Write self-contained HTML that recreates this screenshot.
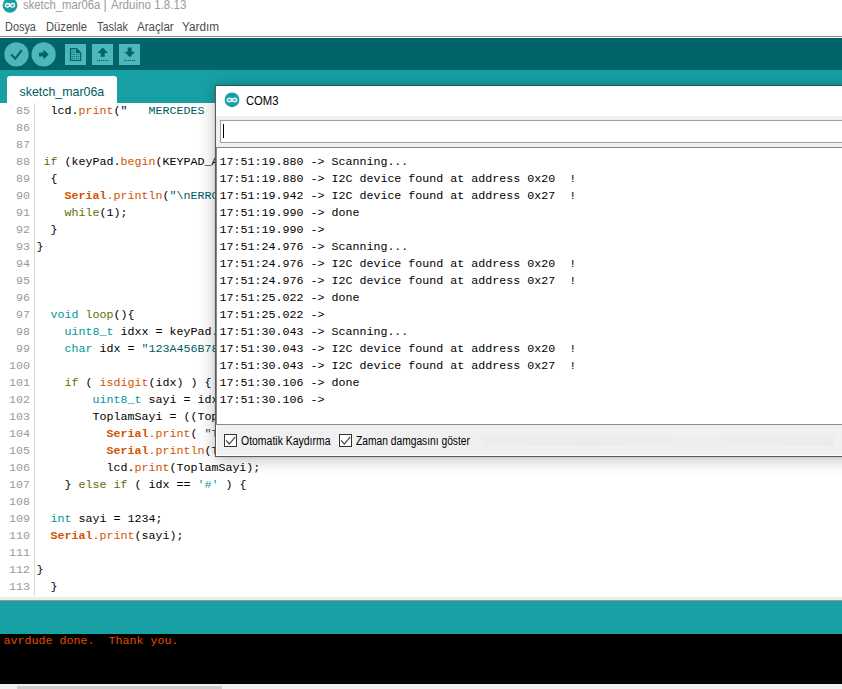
<!DOCTYPE html>
<html>
<head>
<meta charset="utf-8">
<title>sketch_mar06a | Arduino 1.8.13</title>
<style>
html,body{margin:0;padding:0;}
body{width:842px;height:689px;overflow:hidden;position:relative;background:#fff;font-family:"Liberation Sans",sans-serif;}
.abs{position:absolute;}
/* title bar */
.tt{top:-3px;transform-origin:0 0;font-size:12.600px;color:#9a9a9a;white-space:pre;line-height:16px;}
/* menu */
#menu span{position:absolute;transform-origin:0 0;top:19px;font-size:12px;line-height:16px;color:#4d4d4d;white-space:pre;}
#menuline{left:0;top:36px;width:842px;height:1px;background:#8e8e8e;}
/* toolbar */
#toolbar{left:0;top:38px;width:842px;height:32px;background:#006468;}
#tabbar{left:0;top:70px;width:842px;height:33px;background:#17a1a5;}
#tab{left:7px;top:76px;width:110px;height:30px;background:#fff;border-radius:3px 3px 0 0;}
#tabtxt{left:19.5px;top:84px;font-size:12.4px;line-height:16px;color:#005c5f;white-space:pre;}
.circ{position:absolute;width:24px;height:24.4px;border-radius:50%;background:#4db7bb;top:42.2px;}
.sq{position:absolute;width:21px;height:21px;background:#4db7bb;top:44px;}
/* editor */
#editor{left:0;top:103px;width:842px;height:496px;background:#fff;}
#gutterline{left:34px;top:103px;width:1px;height:493px;background:#d9d9d9;}
.ln,.code{position:absolute;font-family:"Liberation Mono",monospace;font-size:11.667px;line-height:17px;white-space:pre;}
.ln{left:0;width:30px;text-align:right;color:#999;top:103px;}
.code{left:36.5px;top:103px;color:#000;}
.k1{color:#d35400;} .k3{color:#5e6d03;} .ty{color:#00979c;} .st{color:#005c5f;}
/* bottom */
#split{left:0;top:597px;width:842px;height:4px;background:#ececec;border-bottom:1px solid #8a9a9b;box-sizing:border-box;}
#status{left:0;top:601px;width:842px;height:33px;background:#17a1a5;}
#console{left:0;top:634px;width:842px;height:50px;background:#000;}
#contxt{left:3.5px;top:634px;font-family:"Liberation Mono",monospace;font-size:11.667px;line-height:15px;color:#e34c00;white-space:pre;}
#hscroll{left:0;top:684px;width:842px;height:5px;background:#f0f0f0;}
#hthumb{left:17px;top:686px;width:205px;height:3px;background:#cdcdcd;}
/* serial monitor */
#win{left:215px;top:85px;width:640px;height:372px;background:#fff;box-shadow:0 0 2px rgba(0,0,0,.15),0 2px 16px rgba(0,0,0,.27);border:1px solid #5a5a5a;border-top-color:#2b5557;box-sizing:border-box;}
#wtitle{left:245.5px;top:93px;transform-origin:0 0;transform:scaleX(0.937);font-size:12px;line-height:16px;color:#000;}
#wpanel{left:216px;top:116px;width:626px;height:31px;background:#f0f0f0;}
#winput{left:220px;top:120px;width:630px;height:23px;background:#fff;border:1px solid #9d9da6;box-sizing:border-box;}
#caret{left:223px;top:124px;width:1px;height:14px;background:#000;}
#wout{left:216px;top:147px;width:640px;height:278px;background:#fff;border-top:1px solid #828790;border-left:1px solid #828790;box-sizing:border-box;}
#wouttxt{left:219.500px;top:154px;font-family:"Liberation Mono",monospace;font-size:11.667px;line-height:17px;color:#000;white-space:pre;}
#wbot{left:217px;top:424px;width:625px;height:31px;background:#f0f0f0;border-top:1px solid #8c8c8c;box-sizing:border-box;}
.cb{position:absolute;width:13px;height:13px;box-sizing:border-box;border:1px solid #333;background:#fff;top:434px;}
.cbl{position:absolute;top:433px;font-size:12px;line-height:16px;color:#000;white-space:pre;transform-origin:0 0;}
</style>
</head>
<body>
<!-- title -->
<svg class="abs" style="left:2px;top:-3px" width="16" height="16" viewBox="0 0 16 16"><circle cx="8" cy="8.300" r="7.400" fill="#1a9ea3"/><g fill="rgba(255,255,255,.35)" stroke="#fff" stroke-width="1.050"><ellipse cx="5.400" cy="8.300" rx="2.250" ry="1.950"/><ellipse cx="10.400" cy="8.300" rx="2.250" ry="1.950"/></g></svg>
<div id="title" class="abs tt" style="left:23.3px;transform:scaleX(.899)">sketch_mar06a</div><div id="title2" class="abs tt" style="left:103.5px">|</div><div id="title3" class="abs tt" style="left:110.5px;transform:scaleX(.921)">Arduino 1.8.13</div>
<div id="menu">
<span id="m1" style="left:4.7px;transform:scaleX(.909)">Dosya</span><span id="m2" style="left:45.9px;transform:scaleX(.932)">Düzenle</span><span id="m3" style="left:96.9px;transform:scaleX(.909)">Taslak</span><span id="m4" style="left:137px;transform:scaleX(.966)">Araçlar</span><span id="m5" style="left:182.4px;transform:scaleX(.98)">Yardım</span>
</div>
<div id="menuline" class="abs"></div>
<div id="toolbar" class="abs"></div>
<div id="tabbar" class="abs"></div>
<div class="sq" style="left:65px"></div>
<div class="sq" style="left:92px"></div>
<div class="sq" style="left:119px"></div>
<svg class="abs" style="left:0;top:38px" width="160" height="32" viewBox="0 0 160 32">
 <circle cx="16.450" cy="16.400" r="12.100" fill="#4db7bb"/><circle cx="43.650" cy="16.400" r="12.100" fill="#4db7bb"/>
 <g fill="none" stroke="#006468" stroke-width="2">
  <path d="M11.3 16.5 L15.2 20.6 L21.8 12.2"/>
 </g>
 <g fill="#006468">
  <path d="M39 14.500 h4.500 v-3 l5.2 5 l-5.2 5 v-3 h-4.500 z"/>
  <path d="M102.700 9.600 l5.300 5.400 h-3.300 v3.800 h-4 v-3.800 h-3.300 z"/>
  <path d="M129.700 19.200 l5.300 -5.400 h-3.300 v-4.200 h-4 v4.200 h-3.300 z"/>
 </g>
 <path d="M70.500 10.500 H76.500 L80.700 14.700 V22.500 H70.500 Z" fill="none" stroke="#006468" stroke-width="1.200"/>
 <g fill="#006468"><path d="M76 10.200 V15.100 H81 Z"/><rect x="71.55" y="11.55" width="1.150" height="1.150"/><rect x="73.65" y="11.55" width="1.150" height="1.150"/><rect x="71.55" y="13.65" width="1.150" height="1.150"/><rect x="73.65" y="13.65" width="1.150" height="1.150"/><rect x="71.55" y="15.75" width="1.150" height="1.150"/><rect x="73.65" y="15.75" width="1.150" height="1.150"/><rect x="75.85" y="15.75" width="1.150" height="1.150"/><rect x="77.95" y="15.75" width="1.150" height="1.150"/><rect x="71.55" y="17.95" width="1.150" height="1.150"/><rect x="73.65" y="17.95" width="1.150" height="1.150"/><rect x="75.85" y="17.95" width="1.150" height="1.150"/><rect x="77.95" y="17.95" width="1.150" height="1.150"/><rect x="71.55" y="20.05" width="1.150" height="1.150"/><rect x="73.65" y="20.05" width="1.150" height="1.150"/><rect x="75.85" y="20.05" width="1.150" height="1.150"/><rect x="77.95" y="20.05" width="1.150" height="1.150"/></g>
 <g fill="#006468">
  <rect x="97" y="22" width="1.200" height="1"/><rect x="99" y="22" width="1.200" height="1"/><rect x="101" y="22" width="1.200" height="1"/><rect x="103" y="22" width="1.200" height="1"/><rect x="105" y="22" width="1.200" height="1"/><rect x="107" y="22" width="1.200" height="1"/>
  <rect x="124" y="22" width="1.200" height="1"/><rect x="126" y="22" width="1.200" height="1"/><rect x="128" y="22" width="1.200" height="1"/><rect x="130" y="22" width="1.200" height="1"/><rect x="132" y="22" width="1.200" height="1"/><rect x="134" y="22" width="1.200" height="1"/>
 </g>
</svg>
<div id="tab" class="abs"></div>
<div id="tabtxt" class="abs">sketch_mar06a</div>

<!-- editor -->
<div id="editor" class="abs"></div>
<div id="gutterline" class="abs"></div>
<div class="ln">85
86
87
88
89
90
91
92
93
94
95
96
97
98
99
100
101
102
103
104
105
106
107
108
109
110
111
112
113</div>
<div class="code">  lcd.<span class="k1">print</span>("   <span class="st">MERCEDES</span>


 <span class="k3">if</span> (keyPad.<span class="k1">begin</span>(KEYPAD_ADDRESS) == false)
  {
    <span class="k1"><b>Serial</b>.println</span>(<span class="st">"\nERROR: cannot communicate</span>
    <span class="k3">while</span>(1);
  }
}



  <span class="ty">void</span> <span class="k3">loop</span>(){
    <span class="ty">uint8_t</span> idxx = keyPad.getKey();
    <span class="ty">char</span> idx = <span class="st">"123A456B789C*0#DNF"</span>[idxx];

    <span class="k3">if</span> ( <span class="k1">isdigit</span>(idx) ) {
        <span class="ty">uint8_t</span> sayi = idx - '0';
        ToplamSayi = ((ToplamSayi * 10) + sayi);
          <span class="k1"><b>Serial</b>.print</span>( <span class="st">"ToplamSayi"</span>);
          <span class="k1"><b>Serial</b>.println</span>(ToplamSayi);
          lcd.<span class="k1">print</span>(ToplamSayi);
    } <span class="k3">else</span> <span class="k3">if</span> ( idx == <span class="ty">'#'</span> ) {

  <span class="ty">int</span> sayi = 1234;
  <span class="k1"><b>Serial</b>.print</span>(sayi);

}
  }</div>

<!-- bottom -->
<div id="split" class="abs"></div>
<div id="status" class="abs"></div>
<div id="console" class="abs"></div>
<div id="contxt" class="abs">avrdude done.  Thank you.</div>
<div id="hscroll" class="abs"></div>
<div id="hthumb" class="abs"></div>

<!-- serial monitor -->
<div id="win" class="abs"></div>
<svg class="abs" style="left:224px;top:92px" width="16" height="16" viewBox="0 0 16 16"><circle cx="8" cy="7.800" r="7.350" fill="#1a9ea3"/><g fill="rgba(255,255,255,.35)" stroke="#fff" stroke-width="1.050"><ellipse cx="5.450" cy="7.950" rx="2.350" ry="1.950"/><ellipse cx="10.550" cy="7.950" rx="2.350" ry="1.950"/></g></svg>
<div id="wtitle" class="abs">COM3</div>
<div id="wpanel" class="abs"></div>
<div id="winput" class="abs"></div>
<div id="caret" class="abs"></div>
<div id="wout" class="abs"></div>
<div id="wouttxt" class="abs">17:51:19.880 -> Scanning...
17:51:19.880 -> I2C device found at address 0x20  !
17:51:19.942 -> I2C device found at address 0x27  !
17:51:19.990 -> done
17:51:19.990 -> 
17:51:24.976 -> Scanning...
17:51:24.976 -> I2C device found at address 0x20  !
17:51:24.976 -> I2C device found at address 0x27  !
17:51:25.022 -> done
17:51:25.022 -> 
17:51:30.043 -> Scanning...
17:51:30.043 -> I2C device found at address 0x20  !
17:51:30.043 -> I2C device found at address 0x27  !
17:51:30.106 -> done
17:51:30.106 -> </div>
<div id="wbot" class="abs"></div>
<div class="abs" style="left:482px;top:436px;width:352px;height:10px;background:linear-gradient(90deg,rgba(0,0,0,.012),rgba(0,0,0,.02) 30%,rgba(0,0,0,.008) 60%,rgba(0,0,0,.018))"></div>
<div class="cb" style="left:224px"></div>
<svg class="abs" style="left:224px;top:434px" width="13" height="13" viewBox="0 0 13 13"><path d="M2 6.300 L5.300 10 L11.300 2.800" fill="none" stroke="#444" stroke-width="1.150"/></svg>
<div id="cb1" class="cbl" style="left:240.9px;transform:scaleX(.872)">Otomatik Kaydırma</div>
<div class="cb" style="left:339px"></div>
<svg class="abs" style="left:339px;top:434px" width="13" height="13" viewBox="0 0 13 13"><path d="M2 6.300 L5.300 10 L11.300 2.800" fill="none" stroke="#444" stroke-width="1.150"/></svg>
<div id="cb2" class="cbl" style="left:356px;transform:scaleX(.854)">Zaman damgasını göster</div>
</body>
</html>
